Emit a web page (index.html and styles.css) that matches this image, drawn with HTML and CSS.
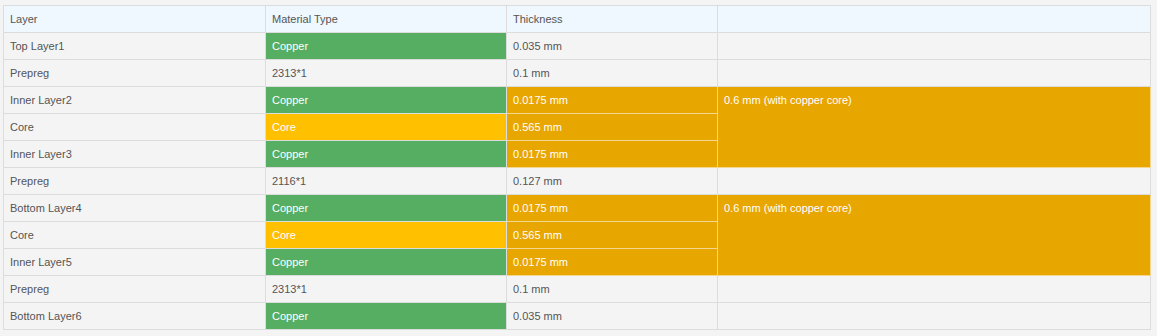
FILE: index.html
```html
<!DOCTYPE html>
<html>
<head>
<meta charset="utf-8">
<link rel="stylesheet" href="styles.css">
</head>
<body>
<table class="stack">
  <colgroup>
    <col class="c1"><col class="c2"><col class="c3"><col class="c4">
  </colgroup>
  <thead>
    <tr><th>Layer</th><th>Material Type</th><th>Thickness</th><th></th></tr>
  </thead>
  <tbody>
    <tr><td>Top Layer1</td><td class="green">Copper</td><td>0.035 mm</td><td></td></tr>
    <tr><td>Prepreg</td><td>2313*1</td><td>0.1 mm</td><td></td></tr>
    <tr><td>Inner Layer2</td><td class="green">Copper</td><td class="orange">0.0175 mm</td><td class="orange core" rowspan="3">0.6 mm (with copper core)</td></tr>
    <tr><td>Core</td><td class="yellow">Core</td><td class="orange">0.565 mm</td></tr>
    <tr><td>Inner Layer3</td><td class="green">Copper</td><td class="orange">0.0175 mm</td></tr>
    <tr><td>Prepreg</td><td>2116*1</td><td>0.127 mm</td><td></td></tr>
    <tr><td>Bottom Layer4</td><td class="green">Copper</td><td class="orange">0.0175 mm</td><td class="orange core" rowspan="3">0.6 mm (with copper core)</td></tr>
    <tr><td>Core</td><td class="yellow">Core</td><td class="orange">0.565 mm</td></tr>
    <tr><td>Inner Layer5</td><td class="green">Copper</td><td class="orange">0.0175 mm</td></tr>
    <tr><td>Prepreg</td><td>2313*1</td><td>0.1 mm</td><td></td></tr>
    <tr><td>Bottom Layer6</td><td class="green">Copper</td><td>0.035 mm</td><td></td></tr>
  </tbody>
</table>
</body>
</html>
```

FILE: styles.css
```css
html, body {
  margin: 0;
  background: #f4f4f4;
}
body {
  padding: 5px 3px;
  font-family: "Liberation Sans", Arial, sans-serif;
  font-size: 11px;
  color: #555;
}
.stack {
  border-collapse: collapse;
  table-layout: fixed;
  width: 1147px;
}
.c1 { width: 262px; }
.c2 { width: 241px; }
.c3 { width: 211px; }
.c4 { width: 433px; }
.stack th,
.stack td {
  border: 1px solid #dcdcdc;
  height: 26px;
  line-height: 26px;
  padding: 0 6px;
  text-align: left;
  font-weight: normal;
  vertical-align: top;
  white-space: nowrap;
  background: #f4f4f4;
}
.stack th {
  background: #eef8fe;
}
.stack td.green {
  background: #56ae63;
  color: #fff;
}
.stack td.yellow {
  background: #ffc000;
  color: #fff;
}
.stack td.orange {
  background: #e8a600;
  color: #fff;
  border-color: #f3d68f;
}
```
